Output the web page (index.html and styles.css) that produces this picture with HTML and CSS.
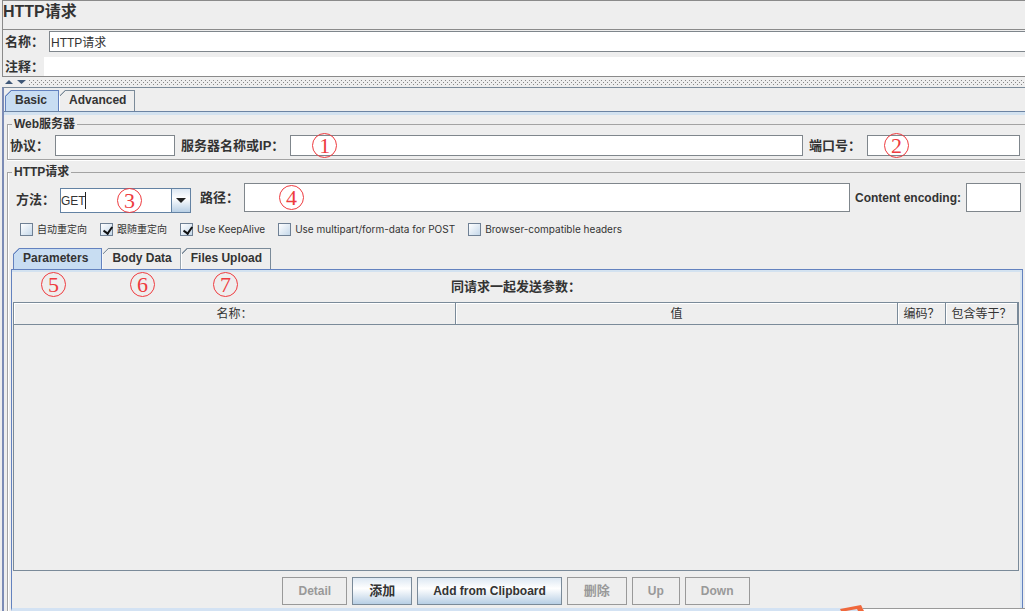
FILE: index.html
```html
<!DOCTYPE html>
<html lang="zh-CN">
<head>
    <meta charset="UTF-8">
    <meta name="viewport" content="width=device-width, initial-scale=1.0">
    <title>HTTP请求</title>
    <link rel="stylesheet" href="styles.css">
</head>
<body>
    <div class="window">
        <h1 class="title">HTTP请求</h1>
        <div class="info">
            <div class="info-row">
                <label class="label" for="name">名称：</label>
                <input class="field" type="text" id="name" value="HTTP请求">
            </div>
            <div class="info-row comment-row">
                <label class="label" for="comment">注释：</label>
                <input class="field plain" type="text" id="comment">
            </div>
        </div>
        <div class="divider">
            <svg class="arrows" width="26" height="8" viewBox="0 0 26 8">
                <path d="M3 6 L7 2 L11 6 Z M15 2 L24 2 L19.500 6 Z" fill="#3f5878"/>
            </svg>
            <div class="dots"></div>
        </div>

        <div class="main">
            <div class="tabs">
                <button type="button" class="tab active">Basic</button>
                <button type="button" class="tab">Advanced</button>
            </div>
            <div class="pane">
                <fieldset class="group">
                    <legend>Web服务器</legend>
                    <div class="row">
                        <label class="label" for="protocol">协议：</label>
                        <input class="field protocol" type="text" id="protocol">
                        <label class="label" for="server">服务器名称或IP：</label>
                        <div class="holder server">
                            <input class="field" type="text" id="server">
                            <span class="mark">1</span>
                        </div>
                        <label class="label" for="port">端口号：</label>
                        <div class="holder port">
                            <input class="field" type="text" id="port">
                            <span class="mark port-mark">2</span>
                        </div>
                    </div>
                </fieldset>

                <fieldset class="group request">
                    <legend>HTTP请求</legend>
                    <div class="row path-row">
                        <label class="label method-label" for="method">方法：</label>
                        <div class="holder method">
                            <select id="method">
                                <option>GET</option>
                                <option>POST</option>
                                <option>PUT</option>
                                <option>DELETE</option>
                            </select>
                            <span class="caret"></span>
                            <span class="drop"><svg width="10" height="6" viewBox="0 0 10 6"><path d="M0 0 H10 L5 5 Z" fill="#222"/></svg></span>
                            <span class="mark method-mark">3</span>
                        </div>
                        <label class="label path-label" for="path">路径：</label>
                        <div class="holder path">
                            <input class="field tall" type="text" id="path">
                            <span class="mark">4</span>
                        </div>
                        <label class="label latin" for="encoding">Content encoding:</label>
                        <input class="field tall encoding" type="text" id="encoding">
                    </div>
                    <div class="checks">
                        <label><input type="checkbox">自动重定向</label>
                        <label><input type="checkbox" checked>跟随重定向</label>
                        <label><input type="checkbox" checked>Use KeepAlive</label>
                        <label><input type="checkbox">Use multipart/form-data for POST</label>
                        <label><input type="checkbox">Browser-compatible headers</label>
                    </div>

                    <div class="tabs inner-tabs">
                        <button type="button" class="tab active">Parameters</button>
                        <button type="button" class="tab">Body Data</button>
                        <button type="button" class="tab">Files Upload</button>
                    </div>
                    <div class="params">
                        <span class="mark mark-5">5</span>
                        <span class="mark mark-6">6</span>
                        <span class="mark mark-7">7</span>
                        <div class="caption">同请求一起发送参数：</div>
                        <div class="scroll">
                            <table>
                                <thead>
                                    <tr>
                                        <th>名称：</th>
                                        <th>值</th>
                                        <th class="col-encode">编码？</th>
                                        <th class="col-include">包含等于？</th>
                                    </tr>
                                </thead>
                            </table>
                        </div>
                        <div class="buttons">
                            <button type="button" disabled>Detail</button>
                            <button type="button" class="cn-btn">添加</button>
                            <button type="button">Add from Clipboard</button>
                            <button type="button" class="cn-btn" disabled>删除</button>
                            <button type="button" disabled>Up</button>
                            <button type="button" disabled>Down</button>
                        </div>
                    </div>
                </fieldset>
            </div>
        </div>
        <svg class="badge" width="185" height="6" viewBox="0 0 185 6">
            <path d="M22 4 H185 V6 H22 Z" fill="#fff"/>
            <path d="M23 3.500 H185" stroke="#999" fill="none"/>
            <path d="M0 4 L21 0 L24 6 H18 L17 4 L6 6 H1 Z" fill="#f0683c"/>
        </svg>
    </div>
</body>
</html>
```

FILE: styles.css
```css
* {
    box-sizing: border-box;
}
body {
    margin: 0;
    background: #eee;
    color: #333;
    font-family: "Liberation Sans", "Noto Sans CJK SC", sans-serif;
    font-size: 12px;
    line-height: 16px;
}
input, select, button {
    font: inherit;
    color: inherit;
    margin: 0;
    border-radius: 0;
}
.window {
    position: relative;
    display: flex;
    flex-direction: column;
    height: 100vh;
    padding-left: 2px;
    overflow: hidden;
}
.title {
    margin: 0;
    height: 29px;
    border-top: 1px solid #8a8a8a;
    border-left: 1px solid #8a8a8a;
    font-size: 16px;
    line-height: 22px;
}
.info {
    border: 1px solid #8a8a8a;
    border-right: none;
}
.info-row {
    display: flex;
    align-items: center;
    gap: 5px;
    padding: 1px 0 0 2px;
}
.comment-row {
    gap: 0;
    padding-top: 5px;
}
.label {
    flex: none;
    font-size: 13px;
    font-weight: bold;
    white-space: nowrap;
}
.latin {
    font-size: 12px;
}
.field {
    flex: 1;
    width: 100%;
    min-width: 0;
    height: 21px;
    padding: 0 1px;
    border: 1px solid #7f868c;
    background: #fff;
    outline: none;
}
.info .field {
    border-right: none;
}
.info .plain {
    height: 19px;
    border: none;
}
.divider {
    display: flex;
    align-items: center;
    height: 10px;
}
.arrows {
    flex: none;
}
.dots {
    flex: 1;
    height: 6px;
    background:
        conic-gradient(from 90deg at 3px 3px, #888 25%, transparent 0) 0 0 / 4px 4px,
        conic-gradient(from 90deg at 3px 3px, #888 25%, transparent 0) 2px 2px / 4px 4px;
}

/* tabs */
.main {
    display: flex;
    flex: 1;
    flex-direction: column;
    min-height: 0;
    border-top: 1px solid #7a8a99;
    border-left: 2px solid #7b8bb5;
}
.tabs {
    display: flex;
    padding: 2px 0 0 1px;
}
.tab {
    height: 21px;
    padding: 0 8px 2px 9px;
    border: 1px solid #7a8a99;
    border-left-color: #fff;
    border-bottom: none;
    background: linear-gradient(135deg, #7a8a99 4px, #eee 4px);
    clip-path: polygon(6px 0, 100% 0, 100% 100%, 0 100%, 0 6px);
    font-weight: bold;
}
.tab.active {
    padding: 0 11px 2px 9px;
    border-color: #6382bf;
    background: linear-gradient(135deg, #6382bf 4px, #c8ddf2 4px);
}
.pane {
    display: flex;
    flex: 1;
    flex-direction: column;
    min-height: 0;
    padding: 3px 0 0 3px;
    border-top: 1px solid #6c84a3;
    box-shadow: inset 0 3px #d3e2f0;
}

/* groups */
.group {
    min-width: 0;
    margin: 0;
    padding: 0 5px 3px 2px;
    border: 1px solid #a3a3a3;
    border-right: none;
    box-shadow: inset 1px 0 #fff, 0 1px #fff;
}
.group legend {
    margin-left: 2px;
    padding: 0 2px;
    font-weight: bold;
    line-height: 18px;
}
.row {
    display: flex;
    align-items: center;
    gap: 6px;
    padding-top: 2px;
}
.holder {
    position: relative;
    display: flex;
}
.protocol {
    flex: none;
    width: 120px;
}
.server {
    flex: 1;
}
.port {
    width: 153px;
}
.request {
    display: flex;
    flex: 1;
    flex-direction: column;
    min-height: 0;
    margin-top: 3px;
    padding: 0;
    border-bottom: none;
}
.request legend {
    margin-left: 4px;
}
.path-row {
    gap: 5px;
    padding: 1px 4px 0 8px;
}
.method {
    width: 131px;
    margin-top: 6px;
}
.method-label {
    margin-top: 4px;
}
.path-label {
    margin-left: 4px;
}
.path {
    flex: 1;
}
.tall {
    height: 29px;
}
.encoding {
    flex: none;
    width: 55px;
}
.method select {
    width: 100%;
    height: 25px;
    padding: 0;
    border: 1px solid #6382a3;
    background: #fff;
    appearance: none;
}
.caret {
    position: absolute;
    left: 25px;
    top: 4px;
    height: 17px;
    border-left: 1px solid #222;
}
.drop {
    position: absolute;
    top: 0;
    right: 0;
    display: flex;
    align-items: center;
    justify-content: center;
    width: 20px;
    height: 25px;
    border: 1px solid #6382a3;
    background: linear-gradient(#dde8f3, #fff 40%, #b8cfe5);
    pointer-events: none;
}
.checks {
    display: flex;
    align-items: center;
    gap: 13px;
    padding: 8px 0 0 12px;
    font-family: Inter, "Noto Sans CJK SC", sans-serif;
    font-size: 10px;
}
.checks label {
    display: flex;
    align-items: center;
    gap: 4px;
}
.checks input {
    width: 13px;
    height: 13px;
    border: 1px solid #6f8094;
    background: linear-gradient(135deg, #fff, #c5d8ea);
    appearance: none;
}
.checks input:checked::before {
    content: "";
    display: block;
    width: 4px;
    height: 7px;
    margin: 1px 0 0 4px;
    border: solid #111;
    border-width: 0 2px 2px 0;
    transform: rotate(35deg);
}

/* parameters */
.inner-tabs {
    padding: 11px 0 0 5px;
}
.inner-tabs .active {
    padding-right: 13px;
}
.params {
    position: relative;
    display: flex;
    flex: 1;
    flex-direction: column;
    min-height: 0;
    margin: 0 2px 0 3px;
    padding: 0 3px 0 1px;
    border: 1px solid #6382bf;
    border-bottom: 3px solid #d3e2f3;
    box-shadow: inset 0 2px #d3e2f0, inset -2px 0 #d8e5f2;
}
.caption {
    padding: 9px 0 7px;
    font-size: 13px;
    font-weight: bold;
    text-align: center;
}
.scroll {
    flex: 1;
    min-height: 0;
    border: 1px solid #7a8a99;
}
table {
    width: 100%;
    border-collapse: separate;
    border-spacing: 0;
    table-layout: fixed;
}
th {
    height: 22px;
    padding: 0;
    border-right: 1px solid #7a8a99;
    border-bottom: 1px solid #7a8a99;
    box-shadow: inset 1px 1px #fff;
    font-weight: normal;
    white-space: nowrap;
}
.col-encode {
    width: 48px;
}
.col-include {
    width: 72px;
}
.buttons {
    display: flex;
    justify-content: center;
    gap: 5px;
    padding: 6px 0 3px;
}
.buttons button {
    height: 28px;
    padding: 0 15px;
    border: 1px solid #7a8a99;
    background: linear-gradient(#dde8f3, #fff 40%, #b8cfe5);
    font-weight: bold;
}
.buttons .cn-btn {
    padding: 0 16px;
    font-size: 13px;
}
.buttons button:disabled {
    border-color: #999;
    background: #eee;
    color: #999;
}

/* numbered marks */
.mark {
    position: absolute;
    left: 22px;
    top: 50%;
    width: 25px;
    height: 25px;
    margin-top: -13px;
    border: 1px solid #ee3b3f;
    border-radius: 50%;
    color: #ee3b3f;
    font-family: "Liberation Serif", serif;
    font-size: 22px;
    line-height: 23px;
    text-align: center;
    pointer-events: none;
}
.path .mark {
    left: 35px;
}
.port .port-mark {
    left: 17px;
}
.method .method-mark {
    left: 57px;
}
.params .mark {
    top: 15px;
}
.mark-5 {
    left: 29px;
}
.mark-6 {
    left: 118px;
}
.mark-7 {
    left: 201px;
}
.badge {
    position: absolute;
    right: 0;
    bottom: 0;
}
```
